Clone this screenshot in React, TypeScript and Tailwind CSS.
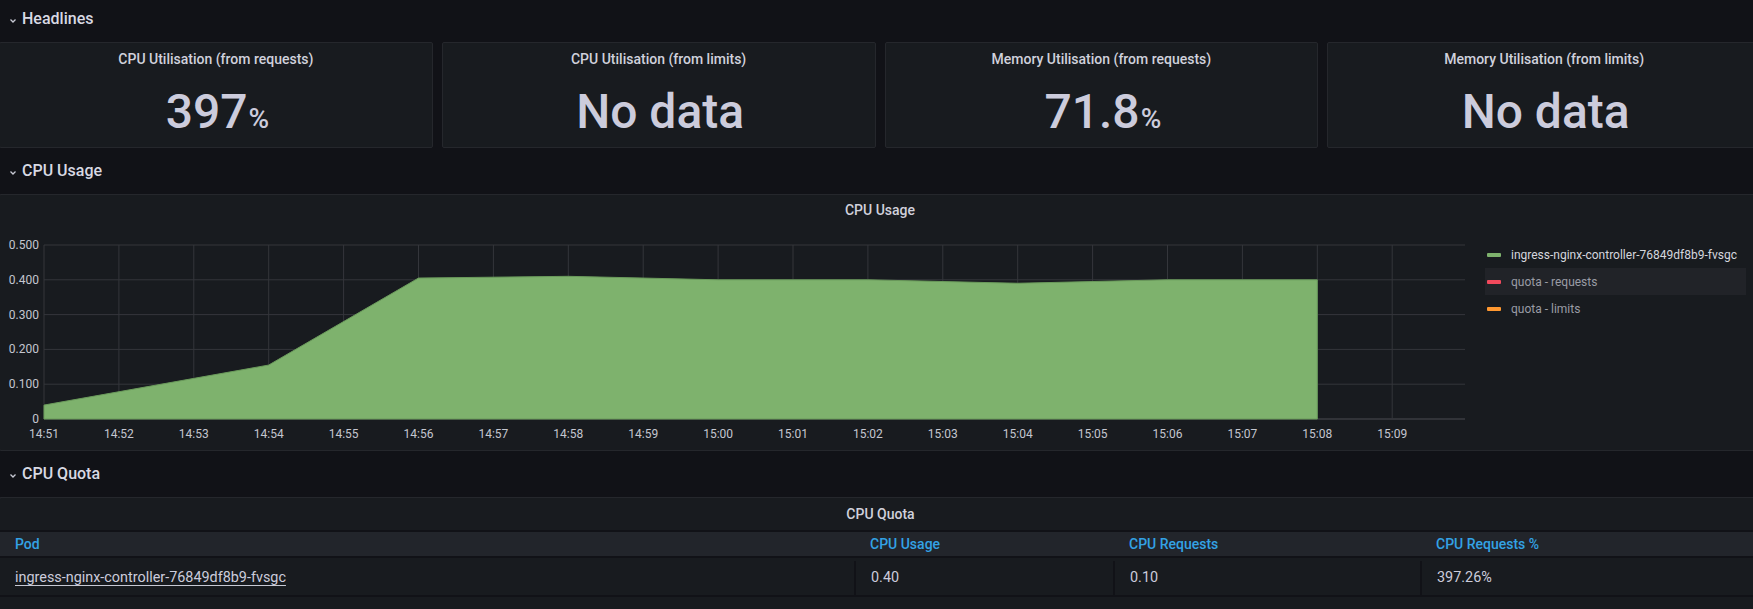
import React from "react";

const stats = [
  { title: "CPU Utilisation (from requests)", value: "397", unit: "%" },
  { title: "CPU Utilisation (from limits)", value: "No data" },
  { title: "Memory Utilisation (from requests)", value: "71.8", unit: "%" },
  { title: "Memory Utilisation (from limits)", value: "No data" },
];

// minutes since 14:00 -> cpu cores
const series: [number, number][] = [
  [51, 0.04],
  [54, 0.155],
  [56, 0.405],
  [58, 0.41],
  [60, 0.4],
  [62, 0.4],
  [64, 0.39],
  [66, 0.4],
  [68, 0.4],
];

const PLOT = { left: 44, right: 1465, top: 19, bottom: 193, step: 74.9 };
const xOf = (m: number) => PLOT.left + (m - 51) * PLOT.step;
const yOf = (v: number) => PLOT.bottom - (v / 0.5) * (PLOT.bottom - PLOT.top);

function Chevron() {
  return (
    <svg width="8" height="6" viewBox="0 0 8 6" className="mr-[5px] mt-[3px]">
      <polyline points="1.5,1.5 4,4 6.5,1.5" fill="none" stroke="#c7c9d4" strokeWidth="1.3" />
    </svg>
  );
}

function RowHeader({ title, first }: { title: string; first?: boolean }) {
  return (
    <div className={`flex items-center pl-[10px] ${first ? "h-[42px] pb-[4px]" : "h-[46px]"}`}>
      <Chevron />
      <span className="text-[16px] font-medium text-[#d8d9e3]">{title}</span>
    </div>
  );
}

function StatPanel({ title, value, unit }: { title: string; value: string; unit?: string }) {
  return (
    <div className="h-[106px] bg-[#181b1f] border border-[#25272c] rounded-[2px] flex flex-col items-center">
      <div className="mt-[7px] h-[18px] leading-[18px] text-[14px] font-medium text-[#d0d1dc]">{title}</div>
      <div className="mt-[20px] ml-[3px] leading-none text-[48px] font-medium text-[#ccccdc] whitespace-nowrap">
        {value}
        {unit && <span className="text-[28px] ml-[1px]">{unit}</span>}
      </div>
    </div>
  );
}

function CpuChart() {
  const minutes = Array.from({ length: 19 }, (_, i) => 51 + i);
  const ticks = [0, 0.1, 0.2, 0.3, 0.4, 0.5];
  const label = (m: number) => (m < 60 ? `14:${m}` : `15:${String(m - 60).padStart(2, "0")}`);
  const pts = series.map(([m, v]) => `${xOf(m)},${yOf(v)}`).join(" ");
  const area = `${xOf(51)},${PLOT.bottom} ${pts} ${xOf(68)},${PLOT.bottom}`;

  return (
    <svg width="1470" height="224" className="shrink-0" style={{ fontFamily: "Roboto, sans-serif" }}>
      {ticks.map((t) => (
        <g key={t}>
          <line
            x1={PLOT.left}
            x2={PLOT.right}
            y1={yOf(t)}
            y2={yOf(t)}
            stroke={t === 0 ? "#4a4c52" : "#34363b"}
            strokeWidth="1"
          />
          <text x="39" y={yOf(t) + 4} textAnchor="end" fontSize="12" fill="#c4c6cf">
            {t === 0 ? "0" : t.toFixed(3)}
          </text>
        </g>
      ))}
      {minutes.map((m) => (
        <g key={m}>
          <line x1={xOf(m)} x2={xOf(m)} y1={PLOT.top} y2={PLOT.bottom} stroke="#34363b" strokeWidth="1" />
          <text x={xOf(m)} y="212" textAnchor="middle" fontSize="12" fill="#c4c6cf">
            {label(m)}
          </text>
        </g>
      ))}
      <polygon points={area} fill="#7eb26d" stroke="#6a9a5b" strokeWidth="1" />
    </svg>
  );
}

const legend = [
  { name: "ingress-nginx-controller-76849df8b9-fvsgc", color: "#7eb26d", text: "text-[#d5d6de]" },
  { name: "quota - requests", color: "#f2495c", text: "text-[#9a9ca5]", active: true },
  { name: "quota - limits", color: "#ff9830", text: "text-[#9a9ca5]" },
];

export default function App() {
  return (
    <div className="w-screen h-[609px] overflow-hidden bg-[#111217] text-[#ccccdc] font-['Roboto',sans-serif]">
      <div className="w-[1762px] -ml-px">
        <RowHeader title="Headlines" first />
        <div className="grid grid-cols-4 gap-[9px]">
          {stats.map((s) => (
            <StatPanel key={s.title} {...s} />
          ))}
        </div>

        <RowHeader title="CPU Usage" />
        <div className="h-[257px] bg-[#181b1f] border border-[#25272c] rounded-[2px] flex flex-col">
          <div className="h-[32px] flex items-center justify-center text-[14px] font-medium text-[#d0d1dc]">
            CPU Usage
          </div>
          <div className="flex">
            <CpuChart />
            <div className="ml-[15px] w-[261px] pt-[15px] flex flex-col">
              {legend.map((l) => (
                <div
                  key={l.name}
                  className={`h-[27px] flex items-center gap-[10px] pl-[2px] text-[12px] ${l.text} ${
                    l.active ? "bg-[#212328]" : ""
                  }`}
                >
                  <span className="w-[14px] h-[4px] rounded-[1px]" style={{ backgroundColor: l.color }} />
                  <span className="whitespace-nowrap">{l.name}</span>
                </div>
              ))}
            </div>
          </div>
        </div>

        <RowHeader title="CPU Quota" />
        <div className="h-[120px] bg-[#181b1f] border-t border-l border-[#25272c] rounded-[2px] flex flex-col">
          <div className="h-[32px] flex items-center justify-center text-[14px] font-medium text-[#d0d1dc]">
            CPU Quota
          </div>
          <div className="h-[2px] bg-[#111217]" />
          <div className="h-[24px] bg-[#22252b] grid grid-cols-[854px_259px_307px_1fr] items-center text-[14px] font-medium text-[#33a2e5]">
            <div className="pl-[15px]">Pod</div>
            <div className="pl-[16px]">CPU Usage</div>
            <div className="pl-[16px]">CPU Requests</div>
            <div className="pl-[16px]">CPU Requests %</div>
          </div>
          <div className="h-[2px] bg-[#111217]" />
          <div className="h-[37px] pt-[3px] grid grid-cols-[854px_259px_307px_1fr] text-[14.4px] text-[#ccccdc]">
            <div className="pl-[15px] flex items-center">
              <span className="underline underline-offset-[3px] decoration-[#c7c9d4]">
                ingress-nginx-controller-76849df8b9-fvsgc
              </span>
            </div>
            <div className="pl-[15px] flex items-center border-l-2 border-[#111217]">0.40</div>
            <div className="pl-[15px] flex items-center border-l-2 border-[#111217]">0.10</div>
            <div className="pl-[15px] flex items-center border-l-2 border-[#111217]">397.26%</div>
          </div>
          <div className="h-[2px] bg-[#111217]" />
        </div>
      </div>
    </div>
  );
}
